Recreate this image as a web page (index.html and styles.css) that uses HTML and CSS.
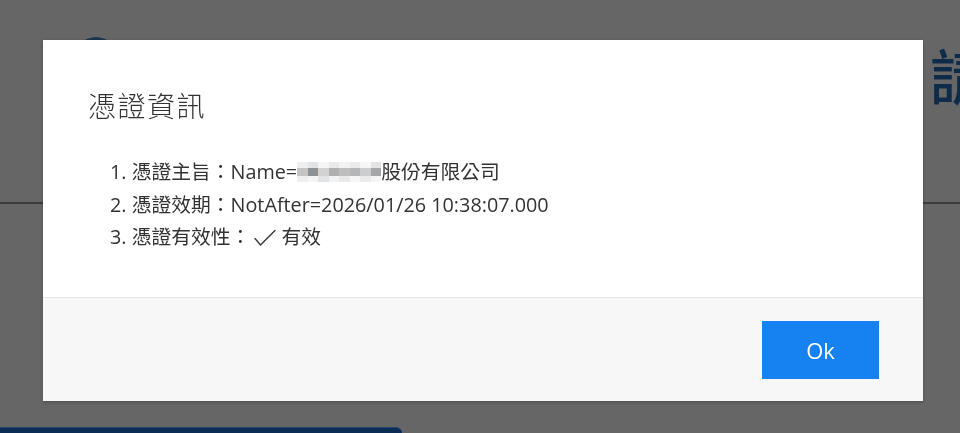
FILE: index.html
```html
<!DOCTYPE html>
<html lang="zh-Hant">
<head>
<meta charset="utf-8">
<title>憑證資訊</title>
<link rel="stylesheet" href="styles.css">
</head>
<body>
<div class="page">
  <header class="page-header">
    <span class="logo"></span>
    <span class="page-title">請</span>
  </header>
  <div class="page-main"></div>
  <div class="page-bar"></div>
</div>

<div class="overlay">
  <div class="modal">
    <div class="modal-header">
      <h2 class="modal-title">憑證資訊</h2>
    </div>
    <div class="modal-body">
      <ol class="info-list">
        <li>憑證主旨：Name=<span class="mosaic"><i class="c1"></i><i class="c2"></i><i class="c3"></i><i class="c4"></i><i class="c5"></i><i class="c6"></i><i class="c7"></i><i class="c8"></i><i class="m1"></i><i class="m2"></i><i class="m3"></i><i class="m4"></i><i class="m5"></i><i class="m6"></i><i class="m7"></i><i class="m8"></i><i class="c1"></i><i class="c3"></i><i class="c2"></i><i class="c5"></i><i class="c4"></i><i class="c7"></i><i class="c6"></i><i class="c3"></i></span>股份有限公司</li>
        <li>憑證效期：NotAfter=2026/01/26 10:38:07.000</li>
        <li>憑證有效性：<svg class="check" width="22" height="18" viewBox="0 0 22 18"><path d="M1 9.5 L6.5 16 L21 1.5" fill="none" stroke="#333" stroke-width="1.3" stroke-linecap="round" stroke-linejoin="round"/></svg> 有效</li>
      </ol>
    </div>
    <div class="modal-footer">
      <button class="btn-ok" type="button">Ok</button>
    </div>
  </div>
</div>
</body>
</html>
```

FILE: styles.css
```css
html, body {
  margin: 0;
  padding: 0;
}
body {
  width: 960px;
  height: 433px;
  overflow: hidden;
  background: #666666;
  font-family: "Noto Sans CJK TC", "Noto Sans", sans-serif;
}

/* background page (dimmed) */
.page {
  height: 433px;
  display: flex;
  flex-direction: column;
}
.page-header {
  height: 202px;
  border-bottom: 2px solid #3b3b3b;
  display: flex;
  align-items: flex-start;
  white-space: nowrap;
  overflow: hidden;
}
.logo {
  flex: none;
  width: 44px;
  height: 44px;
  margin: 37px 0 0 74px;
  border-radius: 50%;
  background: #1d3550;
}
.page-title {
  flex: none;
  margin: 34px 0 0 812px;
  font-size: 60px;
  line-height: 80px;
  font-weight: 500;
  color: #0f2b4a;
}
.page-main {
  flex: 1;
}
.page-bar {
  width: 402px;
  height: 5px;
  background: #0c2c55;
  border-top: 1px solid #24466e;
  border-radius: 0 24px 0 0;
}

/* modal */
.overlay {
  position: fixed;
  inset: 0;
  display: flex;
  align-items: flex-start;
  padding: 40px 0 0 43px;
}
.modal {
  width: 880px;
  background: #ffffff;
  box-shadow: 0 1px 3px rgba(0, 0, 0, 0.25);
}
.modal-header {
  padding: 45px 45px 0 45px;
}
.modal-title {
  margin: 0;
  font-size: 28px;
  line-height: 40px;
  font-weight: 300;
  color: #333333;
  letter-spacing: 1.5px;
}
.modal-body {
  padding: 31px 45px 43px 45px;
}
.info-list {
  margin: 0;
  padding: 0 0 0 22px;
  list-style: none;
  counter-reset: item;
  font-family: "Open Sans", "Noto Sans CJK TC", sans-serif;
  font-size: 19.8px;
  line-height: 32.5px;
  color: #333333;
}
.info-list li {
  counter-increment: item;
  white-space: nowrap;
  height: 32.5px;
}
.info-list li::before {
  content: counter(item) ". ";
}
.mosaic {
  display: inline-grid;
  grid-template-columns: repeat(8, 10.5px);
  grid-template-rows: 6px 8px 6px;
  height: 20px;
  vertical-align: middle;
  position: relative;
  top: -2px;
}
.mosaic i { display: block; }
.c1 { background: #efefef; }
.c2 { background: #e2e3e4; }
.c3 { background: #f5f5f5; }
.c4 { background: #e9e9e9; }
.c5 { background: #f2f2f2; }
.c6 { background: #ebebeb; }
.c7 { background: #f6f6f6; }
.c8 { background: #e4e4e4; }
.m1 { background: #c4c4c4; }
.m2 { background: #8e9294; }
.m3 { background: #d2d2d2; }
.m4 { background: #b0b0b0; }
.m5 { background: #bebebe; }
.m6 { background: #b6b6b6; }
.m7 { background: #cbcdce; }
.m8 { background: #a5a6a7; }
.check {
  vertical-align: -3px;
  margin-left: 4px;
}

.modal-footer {
  border-top: 1px solid #e5e5e5;
  background: #f7f7f7;
  padding: 23px 44px 22px 44px;
  display: flex;
  justify-content: flex-end;
}
.btn-ok {
  width: 117px;
  height: 58px;
  border: none;
  border-radius: 0;
  background: #1681f0;
  color: #ffffff;
  font-family: "Open Sans", "Noto Sans", sans-serif;
  font-size: 22px;
  padding: 0;
}
```
